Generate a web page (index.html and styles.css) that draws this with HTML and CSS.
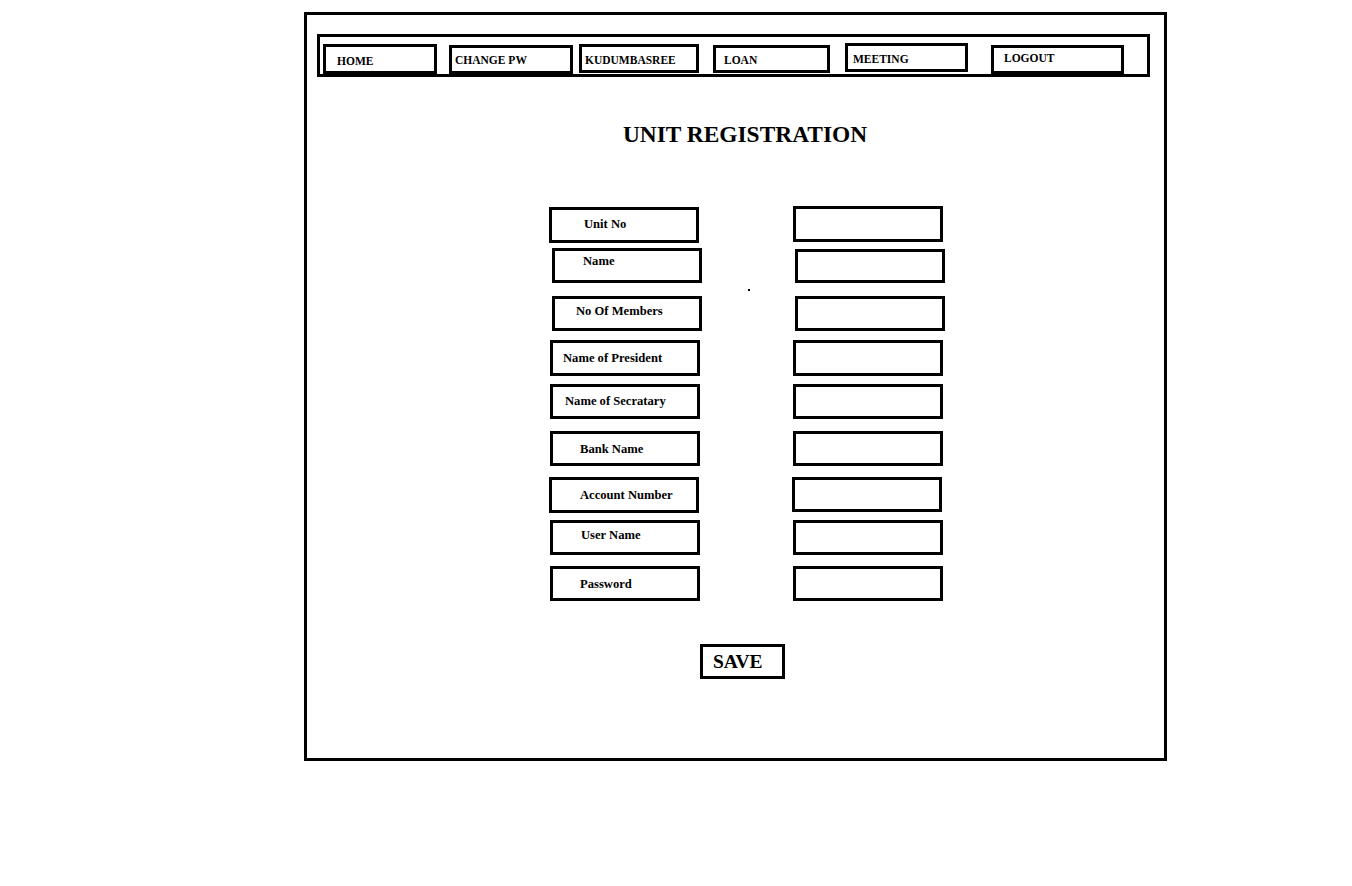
FILE: index.html
```html
<!DOCTYPE html>
<html lang="en">
<head>
<meta charset="utf-8">
<title>Unit Registration</title>
<link rel="stylesheet" href="styles.css">
</head>
<body>
<div class="frame">
  <nav class="nav">
    <a class="nav-item n-home">HOME</a>
    <a class="nav-item n-change">CHANGE PW</a>
    <a class="nav-item n-kudu">KUDUMBASREE</a>
    <a class="nav-item n-loan">LOAN</a>
    <a class="nav-item n-meeting">MEETING</a>
    <a class="nav-item n-logout">LOGOUT</a>
  </nav>

  <h1 class="title">UNIT REGISTRATION</h1>

  <form class="form">
    <span class="stray-dot"></span>
    <div class="row r1"><div class="label">Unit No</div><div class="input"></div></div>
    <div class="row r2"><div class="label">Name</div><div class="input"></div></div>
    <div class="row r3"><div class="label">No Of Members</div><div class="input"></div></div>
    <div class="row r4"><div class="label">Name of President</div><div class="input"></div></div>
    <div class="row r5"><div class="label">Name of Secratary</div><div class="input"></div></div>
    <div class="row r6"><div class="label">Bank Name</div><div class="input"></div></div>
    <div class="row r7"><div class="label">Account Number</div><div class="input"></div></div>
    <div class="row r8"><div class="label">User Name</div><div class="input"></div></div>
    <div class="row r9"><div class="label">Password</div><div class="input"></div></div>
  </form>

  <div class="save-wrap"><button class="save" type="button">SAVE</button></div>
</div>
</body>
</html>
```

FILE: styles.css
```css
* { box-sizing: border-box; }

html, body {
  margin: 0;
  padding: 0;
  background: #fff;
  color: #000;
  font-family: "Liberation Serif", "Times New Roman", serif;
  font-weight: bold;
}

.frame {
  margin: 12px 0 0 304px;
  width: 863px;
  height: 749px;
  border: 3px solid #000;
  display: flex;
  flex-direction: column;
}

/* ---------- nav ---------- */
.nav {
  margin: 19px 0 0 10px;
  width: 833px;
  height: 43px;
  border: 3px solid #000;
  display: flex;
  align-items: flex-start;
}

.nav-item {
  display: flex;
  align-items: center;
  height: 29px;
  border: 3px solid #000;
  font-size: 11.5px;
  line-height: 1;
  white-space: nowrap;
  color: #000;
  padding-top: 2px;
}

.n-home    { margin: 7px 0 0 3px;  width: 114px; height: 30px; padding-left: 11px; padding-top: 5px; }
.n-change  { margin: 8px 0 0 12px; width: 124px; padding-left: 3px; }
.n-kudu    { margin: 7px 0 0 6px;  width: 120px; padding-left: 3px; padding-top: 5px; }
.n-loan    { margin: 8px 0 0 14px; width: 117px; height: 28px; padding-left: 8px; padding-top: 4px; }
.n-meeting { margin: 6px 0 0 15px; width: 123px; padding-left: 5px; padding-top: 5px; }
.n-logout  { margin: 8px 0 0 23px; width: 133px; padding-left: 10px; padding-top: 0; padding-bottom: 2px; }

/* ---------- title ---------- */
.title {
  margin: 46px 0 0 0;
  padding-left: 19px;
  text-align: center;
  font-size: 23.4px;
  line-height: 23px;
  font-weight: bold;
}

/* ---------- form ---------- */
.form {
  position: relative;
  margin: 61px 0 0 242px;
  display: flex;
  flex-direction: column;
}

.stray-dot {
  position: absolute;
  left: 199px;
  top: 82px;
  width: 2px;
  height: 2px;
  background: #000;
}

.row {
  display: flex;
  align-items: flex-start;
}

.label,
.input {
  width: 150px;
  height: 35px;
  border: 3px solid #000;
}

.label {
  display: flex;
  align-items: center;
  font-size: 12.6px;
  line-height: 1;
  white-space: nowrap;
}

.input { margin-left: 93px; }

.r1 { margin-top: 0; }
.r1 .label { height: 36px; padding-left: 32px; padding-bottom: 2px; }
.r1 .input { margin-top: -1px; height: 36px; margin-left: 94px; }

.r2 { margin-top: 5px; margin-left: 3px; }
.r2 .label { padding-left: 28px; padding-bottom: 8px; }
.r2 .input { margin-top: 1px; height: 34px; }

.r3 { margin-top: 13px; margin-left: 3px; }
.r3 .label { padding-left: 21px; padding-bottom: 4px; }

.r4 { margin-top: 9px; margin-left: 1px; }
.r4 .label { height: 36px; padding-left: 10px; }
.r4 .input { height: 36px; }

.r5 { margin-top: 8px; margin-left: 1px; }
.r5 .label { padding-left: 12px; }

.r6 { margin-top: 12px; margin-left: 1px; }
.r6 .label { padding-left: 27px; padding-top: 2px; }

.r7 { margin-top: 11px; }
.r7 .label { height: 36px; padding-left: 28px; }

.r8 { margin-top: 7px; margin-left: 1px; }
.r8 .label { padding-left: 28px; padding-bottom: 4px; }

.r9 { margin-top: 11px; margin-left: 1px; }
.r9 .label { padding-left: 27px; padding-top: 2px; }

/* ---------- save ---------- */
.save-wrap {
  margin: 43px 0 0 393px;
}

.save {
  display: flex;
  align-items: center;
  width: 85px;
  height: 35px;
  padding: 0 0 0 10px;
  margin: 0;
  border: 3px solid #000;
  background: #fff;
  color: #000;
  font-family: "Liberation Serif", "Times New Roman", serif;
  font-weight: bold;
  font-size: 19.5px;
  line-height: 1;
}
```
